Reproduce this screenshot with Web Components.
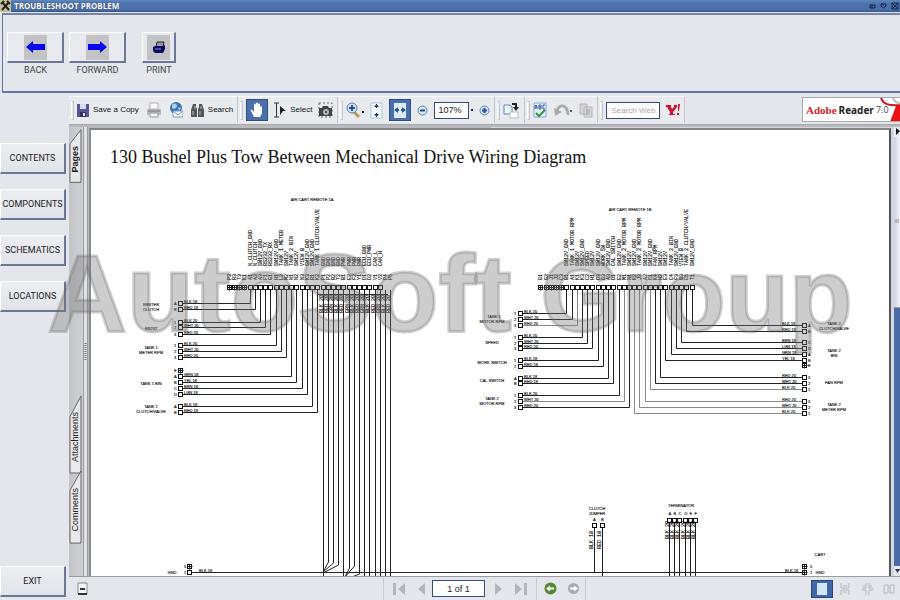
<!DOCTYPE html>
<html lang="en">
<head>
<meta charset="utf-8">
<title>Troubleshoot Problem</title>
<style>
html,body{margin:0;height:100%}
body{background:#e5e6eb;font-family:"Liberation Sans",Arial,sans-serif;color:#222;overflow:hidden}
</style>
</head>
<body>
<trouble-app></trouble-app>
<script>
const define=(name,css,html,after)=>{
  const t=document.createElement('template');
  t.innerHTML=`<style>*,::before,::after,:host::before{box-sizing:border-box}button{font:inherit;color:inherit;margin:0;padding:0;border:0;background:none}svg{display:block}${css}</style>${html}`;
  customElements.define(name,class extends HTMLElement{
    constructor(){super();this.attachShadow({mode:'open'}).append(t.content.cloneNode(true));}
    connectedCallback(){if(after)after(this.shadowRoot,this);}
  });
};

define('title-bar',`
:host{display:flex;align-items:center;height:12px;background:linear-gradient(#6088c0 0,#4c73ae 3px,#4a70ab 10px,#2f4f85 12px);color:#fff;padding-right:0}
h1{margin:0 auto 0 3px;font:bold 8px/10px "Open Sans",sans-serif;text-shadow:0 0 1px #123}
.ctl{width:11px;height:11px;display:flex;align-items:center;justify-content:center}`,
`<svg width="11" height="12" viewBox="0 0 11 12"><path d="M0 0h11v12H0z" fill="#c6c19a"/><path d="M2 2l7 8M9 2L2 10M1 4l3-3M7 1l3 3" stroke="#222" stroke-width="2" fill="none"/></svg>
<h1>TROUBLESHOOT PROBLEM</h1>
<button class="ctl" aria-label="Minimize"><svg width="7" height="5"><path d="M1 1h5v3H1zM3 1v3" fill="none" stroke="#13223f"/></svg></button>
<button class="ctl" aria-label="Restore"><svg width="7" height="6"><path d="M1 1h5v2L3.500 5 1 3zM3 2h1" fill="none" stroke="#13223f"/></svg></button>
<button class="ctl" aria-label="Close"><svg width="8" height="8"><path d="M1 1h6v6H1zM1 1l6 6M7 1L1 7" fill="none" stroke="#13223f"/></svg></button>`);

define('nav-tool',`
:host{display:block}
button{display:flex;flex-direction:column;align-items:center;gap:1px;color:#444;font:9px/12px Roboto,sans-serif}
.face{width:var(--w,57px);height:31px;display:flex;align-items:center;justify-content:center;background:#e8e9ee;border:1px solid;border-color:#fff #6c7796 #6c7796 #fff;border-right-width:2px;border-bottom-width:2px}
.ic{width:23px;height:25px;background:#c3c3c5;display:flex;align-items:center;justify-content:center}`,
`<button><span class="face"><span class="ic"><slot name="icon"></slot></span></span><span><slot></slot></span></button>`);

define('action-panel',`
:host{display:flex;align-items:flex-start;gap:5px;height:80px;margin:1px 0 0 2px;padding:17px 4px;border:1px solid #63789f;border-right:0;border-top:2px solid #7186aa;border-bottom-width:2px}
.gap{margin-left:11px;--w:34px}`,
`<nav-tool>BACK<svg slot="icon" width="19" height="12"><path d="M0 6l7-6v3h12v6H7v3z" fill="#0808f0"/></svg></nav-tool>
<nav-tool>FORWARD<svg slot="icon" width="19" height="12"><path d="M19 6l-7-6v3H0v6h12v3z" fill="#0808f0"/></svg></nav-tool>
<nav-tool class="gap">PRINT<svg slot="icon" width="12" height="12"><path d="M4 1h7l-1 5H3z" fill="#999" stroke="#222"/><path d="M0 6l2-1h8l2-1v4l-2 4H2L0 10z" fill="#0b0b63"/><path d="M2 8h6M4 3h5" stroke="#8a8ad0"/></svg></nav-tool>`);

define('side-button',`
:host{display:block}
button{width:100%;height:31px;background:linear-gradient(#edeef2,#e2e3e9);border:1px solid;border-color:#fff #6c7796 #6c7796 #fff;border-right-width:2px;border-bottom-width:2px;font:9px/12px Roboto,sans-serif;color:#222;white-space:nowrap}`,
`<button><slot></slot></button>`);

define('side-menu',`
:host{display:flex;flex-direction:column;gap:15px;width:66px;padding:50px 0 3px;flex:none}
.end{margin-top:auto}`,
`<side-button>CONTENTS</side-button><side-button>COMPONENTS</side-button><side-button>SCHEMATICS</side-button><side-button>LOCATIONS</side-button><side-button class="end">EXIT</side-button>`);

define('tool-group',`
:host{display:flex;align-items:center;height:27px;gap:var(--gap,6px);padding:0 4px 0 2px;border-right:1px solid #c4c5cb;border-top:1px solid #f8f8fa;background:#e9eaee;flex:none}
:host::before{content:"";width:3px;height:19px;margin-right:calc(3px - var(--gap,6px));border:1px solid #c6c7cc;border-left-color:#fff}`,
`<slot></slot>`);

define('tool-button',`
:host{display:block;flex:none;font-size:8px;line-height:12px}
button{display:flex;align-items:center;gap:4px;height:22px;color:#111;white-space:nowrap}
:host([pressed]) button{width:22px;justify-content:center;background:#4a70ab;border:1px solid #2f4d80}`,
`<button><slot></slot></button>`,(r,h)=>r.querySelector('button').setAttribute('aria-label',h.getAttribute('label')||h.textContent.trim()));

define('reader-logo',`
:host{display:flex;align-items:center;margin-left:auto;width:98px;height:25px;border:1px solid #aaa;border-right:0;background:#fff;overflow:hidden;flex:none}
a{display:flex;align-items:center;gap:2px;height:100%;padding-left:3px;font:bold 10px/14px "Open Sans",sans-serif;color:#222;text-decoration:none;white-space:nowrap}
i{font:bold 11px/14px "Liberation Serif",serif;color:#d2232a}
small{font:9px/14px "Open Sans",sans-serif;color:#444}
svg{flex:none;margin-left:-12px}`,
`<a href="#"><i>Adobe</i><span>Reader</span><small>7.0</small><svg width="26" height="24"><path d="M2 0c2 6 7 8 20 7" fill="none" stroke="#c71f27" stroke-width="2"/><path d="M14 0c1 3 4 5 8 6" fill="none" stroke="#bbb" stroke-width="2"/><path d="M17 8l9-2v18H11z" fill="#ee1111"/></svg></a>`);

define('pdf-toolbar',`
:host{display:flex;align-items:center;height:32px;padding:3px 0 1px;border-bottom:1px solid #a9aab0}
.g1{--gap:8px}.g5{--gap:7px}
input{font:9px/12px "Liberation Sans",sans-serif;border:1px solid #344b78;background:#fff;color:#222;height:17px;padding:0 3px;border-radius:0;margin:0}
.zoom{width:35px}.web{width:54px;text-align:center;font-size:8px}
.web::placeholder{color:#aaa;opacity:1}
.combo{display:flex;align-items:center;gap:2px;width:39px}
.combo::after{content:"";width:2px;height:2px;background:#333;flex:none}`,
`<tool-group class="g1">
<tool-button><svg width="12" height="14"><path d="M0 1h12v13H0z" fill="#55549b"/><path d="M3 1h6v5H3z" fill="#dcdcee"/><path d="M3 9h6v5H3z" fill="#333360"/><path d="M6 10h2v3H6z" fill="#ddd"/></svg>Save a Copy</tool-button>
<tool-button label="Print"><svg width="14" height="16"><path d="M3 1h8v6H3z" fill="#fff" stroke="#aaa"/><path d="M0 7h14v6H0z" fill="#bbb"/><path d="M1 9h12" stroke="#777"/><path d="M3 11h8v4H3z" fill="#f3f3f3" stroke="#999"/></svg></tool-button>
<tool-button label="Email"><svg width="14" height="16"><circle cx="7" cy="6" r="6" fill="#3a74ae"/><path d="M3 3c2-3 5-1 5 1S5 8 3 6zM9 5l3 1-2 3z" fill="#a7d2e8"/><path d="M4 9h10v6H4z" fill="#f4f8fc" stroke="#7a9bc2"/><path d="M4 9l5 4 5-4" fill="none" stroke="#7a9bc2"/></svg></tool-button>
<tool-button><svg width="13" height="15"><path d="M2 1h3v3l1 2v8H0V7zM8 1h3l2 6v7H7V6l1-2z" fill="#555"/><path d="M2 8v4M9 8v4M4 3v3M10 3v3" stroke="#bbb"/></svg>Search</tool-button>
</tool-group>
<tool-group>
<tool-button pressed label="Hand"><svg width="14" height="16"><path d="M4 15L1 9c-1-1 0-2 1-1l2 2V3c0-2 1-2 2 0v4-5c0-2 2-2 2 0v5-4c0-2 2-2 2 0v5-3c0-1 2-1 2 0v6l-2 4z" fill="#fff"/></svg></tool-button>
<tool-button><svg width="12" height="16"><path d="M0 1h5M0 15h5M2.500 1v14" stroke="#333" fill="none"/><path d="M6 4l6 5H9l-3 4z" fill="#222"/></svg>Select</tool-button>
<tool-button label="Snapshot"><svg width="15" height="16"><path d="M1 1h13v14H1z" fill="none" stroke="#666" stroke-dasharray="2 2"/><path d="M1 6h3l1-2h5l1 2h3v8H1z" fill="#444"/><circle cx="8" cy="10" r="3" fill="#aab7c9"/><circle cx="8" cy="10" r="1" fill="#333"/></svg></tool-button>
</tool-group>
<tool-group>
<tool-button label="Zoom in tool"><svg width="18" height="17"><path d="M8 10l5 5" stroke="#b99b55" stroke-width="3"/><circle cx="6" cy="6" r="5" fill="#d5e6f5" stroke="#4e7cb3"/><path d="M3 6h6M6 3v6" stroke="#234f94" stroke-width="2"/><path d="M16 9h2v2h-2z" fill="#222"/></svg></tool-button>
<tool-button label="Fit page"><svg width="13" height="17"><path d="M1 1h11v15H1z" fill="#f3f8fc" stroke="#a9c5dc"/><path d="M6.500 2v4M6.500 11v4" stroke="#223b66"/><path d="M4 5l2.500-3L9 5zM4 12l2.500 3L9 12z" fill="#223b66"/></svg></tool-button>
<tool-button pressed label="Fit width"><svg width="14" height="17"><path d="M1 1h12v15H1z" fill="#dcedf9"/><path d="M1 8l4-3v2h1v2H5v2zM13 8L9 5v2H8v2h1v2z" fill="#2c5796"/></svg></tool-button>
<tool-button label="Zoom out"><svg width="11" height="11"><circle cx="5.500" cy="5.500" r="4.500" fill="#d8e5f3" stroke="#5a7fb2"/><path d="M3 5.500h5" stroke="#234f94" stroke-width="2"/></svg></tool-button>
<span class="combo"><input class="zoom" value="107%" aria-label="Zoom level"></span>
<tool-button label="Zoom in"><svg width="11" height="11"><circle cx="5.500" cy="5.500" r="4.500" fill="#d8e5f3" stroke="#5a7fb2"/><path d="M3 5.500h5M5.500 3v5" stroke="#234f94" stroke-width="2"/></svg></tool-button>
</tool-group>
<tool-group>
<tool-button label="Rotate"><svg width="17" height="17"><path d="M1 3h6l2 2v7H1z" fill="#eef5fb" stroke="#5c86bb"/><path d="M7 10h8v6H7z" fill="#fff" stroke="#bbb"/><path d="M9 2h4v3" fill="none" stroke="#222" stroke-width="2"/><path d="M10 5h6l-3 4z" fill="#222"/></svg></tool-button>
</tool-group>
<tool-group class="g5">
<tool-button label="Spelling"><svg width="14" height="16"><path d="M1 1h12v14H1z" fill="#e5f0fa" stroke="#86a9d2"/><path d="M2 7V4l1-1 1 1v3M2 5h2M6 7V3h2v4zM6 5h2M12 3h-2v4h2" fill="none" stroke="#315b9d"/><path d="M3 11l3 3 6-6" fill="none" stroke="#3c9447" stroke-width="2"/></svg></tool-button>
<tool-button label="Undo"><svg width="18" height="14"><path d="M3 8c2-7 10-8 11 4" fill="none" stroke="#aaa" stroke-width="3"/><path d="M0 5l8 4-7 4z" fill="#aaa"/><path d="M16 7h2v2h-2z" fill="#555"/></svg></tool-button>
<tool-button label="Copy"><svg width="14" height="15"><path d="M1 1h7v10H1zM5 4h8v10H5z" fill="#d6d6da" stroke="#b2b2b8"/><path d="M7 7h4M7 9h4M7 11h4" stroke="#aaa"/></svg></tool-button>
</tool-group>
<tool-group>
<input class="web" placeholder="Search Web" aria-label="Search Web">
<tool-button label="Yahoo search"><svg width="14" height="12"><path d="M0 1h5v2l1 2 2-2V1h3v2L7 8v2h2v1H3v-1h1V8L1 3H0zM12 0h2l-1 7h-1zM11 9h2v2h-2z" fill="#cf1030"/></svg></tool-button>
</tool-group>
<reader-logo></reader-logo>`);

define('page-tab',`
:host{display:grid}
button{display:grid;width:13px;height:var(--h);color:#222;font-size:8px}
svg{grid-area:1/1;width:100%;height:100%}
span{grid-area:1/1;writing-mode:vertical-rl;transform:rotate(180deg);place-self:center;padding-bottom:6px;font-size:9px;line-height:11px}
:host([current]) span{font-weight:bold}`,
`<button><svg viewBox="0 0 13 80" preserveAspectRatio="none"><path d="M1 79V22L12 1v78z" fill="#e9e9ec" stroke="#666" vector-effect="non-scaling-stroke"/></svg><span><slot></slot></span></button>`);

define('tab-strip',`
:host{display:flex;flex-direction:column;width:14px;padding:2px 0 32px;background:linear-gradient(90deg,#c4c5c9,#cfd0d3);flex:none}
.a{--h:54px}.b{--h:79px;margin-top:auto}.c{--h:74px;margin-top:-4px}`,
`<page-tab current class="a">Pages</page-tab><page-tab class="b">Attachments</page-tab><page-tab class="c">Comments</page-tab>`);

define('wiring-diagram',`
:host{display:block;flex:1;min-height:0;overflow:hidden}
svg{width:100%;height:100%}
text{font:4px "Liberation Sans",sans-serif;fill:#000;stroke:#000;stroke-width:.1px}
.v{font:5px "Liberation Mono",monospace}.m{text-anchor:middle}
path{fill:none;stroke:#222;stroke-width:1px}
rect{fill:#fff;stroke:#111}`,
`<svg><g id="d" transform="translate(-91 -180)"></g></svg>`,
r=>{
  const o=[],T=(x,y,s,c='')=>o.push(`<text x="${x}" y="${y}" class="${c}">${s}</text>`);
  const V=(x,y,s)=>o.push(`<text class="v" transform="translate(${x} ${y}) rotate(-90)">${s}</text>`);
  const P=(d,l)=>o.push(l?`<path d="${d}" style="stroke:#888"/>`:`<path d="${d}"/>`);
  const S=(x,y)=>o.push(`<rect x="${x-2}" y="${y-2}" width="4" height="4"/>`);
  const X=(x,y)=>{S(x,y);P(`M${x-2} ${y}h5M${x} ${y-2}v5`)};
  const Y=z=>Math.round(190+z/3)+.5;
  const at=(b,n)=>Math.round(b+5.214*n)+.5;
  const row=(b,skip,ids,labels)=>{
    ids.forEach((id,n)=>{const x=at(b,n);V(x+1,280,id);if(n<skip)X(x,287.5);else if(n<30)S(x,287.5)});
    labels.forEach((s,i)=>V(at(b,i+skip)+1,266,s));
  };
  const idsA='P3 R3 T3 K1 A1 A2 A3 F1 G1 H1 L2 M2 N1 N2 N3 K3 R1 K2 P1 P2 R2 T2 B1 E2 F2 Y1 D1 D2 V1 V2 P4 P5'.split(' ');
  row(228.7,4,idsA,['N_CLUTCH_GND','N_CLUTCH','SW12V_GND','RS232_TX','RS232_RX','SW12V_GND','TANK 1 METER','SW12V','TANK 2 BIN','SW12V','VIEW B','SW12V_GND','SW12V_GND','TANK 1 CLUTCH/VALVE','GND','GND','GND','GND','PWR','PWR','PWR','PWR','ECU_GND','ECU_PWR','CAN_L','CAN_H']);
  const idsB='G1 G2 J1 J2 C3 B1 A1 K1 K3 C2 H1 D3 G3 A3 D1 E2 M1 N1 K2 J3 A2 C1 K4 H2 E3 C4 F3 B3 C5 T1'.split(' ');
  row(540.3,5,idsB,['SW12V_GND','TANK 1 MOTOR RPM','SW12V','SW12V_GND','SPEED','SW12V','SW12V_GND','WORK SW','SW12V_GND','CAL SWITCH','SW12V_GND','TANK 2 MOTOR RPM','SW12V','SW12V_GND','TANK 2 MOTOR RPM','SW12V','SW12V_GND','FAN RPM','SW12V','SW12V','TANK 2 BIN','SW12V_GND','VIEW B','TANK 2 CLUTCH/VALVE','SW12V_GND']);
  const left=(b,start,sx,zs,cols,pins,pale=[])=>zs.forEach((z,i)=>{
    const y=Y(z),x=at(b,start+i);P(`M${x} 290V${y}H${sx+2}`,pale.includes(i));S(sx+.5,y);T(sx+4,y-1,cols[i]);T(sx-6,y+1,pins[i]);});
  left(228.7,4,180,[340,357,395,412,431,466,483,501,559,577,595,613,648,665],
    ['BLK 18','RED 18','BLK 20','WHT 20','RED 20','BLK 20','WHT 20','RED 20','GRN 18','YEL 18','BRN 18','LGN 18','BLK 18','RED 18'],'AB123123ABCDAB');
  X(180.5,370.5);T(174,372,'E');
  left(540.3,5,520,[370,387,404,441,458,475,511,528,563,580,614,632,651],
    ['BLK 20','WHT 20','RED 20','BLK 20','WHT 20','RED 20','BLK 18','RED 18','BLK 18','RED 18','BLK 20','WHT 20','RED 20'],'12312312AB123',[2,11]);
  const rc=['BLK 20','WHT 20','RED 20','BLK 20','WHT 20','RED 20','YEL 18','GRN 18','LGN 18','BRN 18','RED 18','BLK 18'];
  [668,651,632,598,580,562,509,492,475,456,422,405].forEach((z,i)=>{
    const y=Y(z),x=at(540.3,18+i);P(`M${x} 290V${y}H802`,i<4);S(804.5,y);T(782,y-1,rc[i]);T(808,y+1,'123123BADCBA'[i]);});
  X(804.5,365.5);T(808,367,'E');
  for(let n=18;n<32;n++){const x=at(228.7,n);
    const end={19:'V562L323 572',20:'V563L323 572',21:'V565L323 573',24:'V566L345 577',23:'V568L345 577',25:'V574L352 577'}[n]||'V577';
    P(`M${x} 290${end}`);V(x-1,313,['BLK 20','RED 20','GRN 20'][n%3]);}
  P('M318 294.5H388');
  [[312,201,'AIR CART REMOTE 1A'],[630,211,'AIR CART REMOTE 1B'],[151,306,'IGNITER'],[151,311,'CLUTCH'],[151,330,'RS232'],[151,349,'TANK 1'],[151,354,'METER RPM'],[151,385,'TANK 1 BIN'],[151,408,'TANK 1'],[151,413,'CLUTCH/VALVE'],
   [494,318,'TANK 1'],[492,323,'MOTOR RPM'],[492,344,'SPEED'],[492,364,'WORK SWITCH'],[492,382,'CAL SWITCH'],[492,400,'TANK 2'],[492,405,'MOTOR RPM'],
   [834,325,'TANK 2'],[834,330,'CLUTCH/VALVE'],[834,352,'TANK 2'],[834,357,'BIN'],[834,384,'FAN RPM'],[834,406,'TANK 2'],[834,411,'METER RPM'],
   [597,510,'CLUTCH'],[597,515,'JUMPER'],[681,507,'TERMINATOR'],[820,556,'CART'],[820,574,'GND'],[172,574,'GND']].forEach(a=>T(...a,'m'));
  P('M191 572.5H802');
  X(189.5,566.5);S(189.5,572.5);X(804.5,566.5);X(804.5,572.5);
  T(184,568,'5');T(184,574,'1');T(199,572,'BLK 18');T(785,572,'BLK 18');T(810,568,'5');T(810,574,'1');
  [594,602].forEach((x,i)=>{P(`M${x+.5} 527V${i?577:572}`);S(x+.5,525.5);V(x-1,549,i?'RED 18':'BLK 18');T(x-1,521,'AB'[i]);});
  for(let i=0;i<6;i++){const x=Math.round(669+5.2*i)+.5;P(`M${x} 522V577`);S(x,520.5);V(x-1,539,'BLK 20');T(x-1,515,'ABCDEF'[i]);}
  r.getElementById('d').innerHTML=o.join('');
});

define('document-page',`
:host{display:flex;flex-direction:column;flex:1;min-width:0;min-height:0;background:#fdfefd;border:2px solid #8b8c90;border-color:#85868a #55565a transparent #8b8c90;border-bottom:0}
h2{margin:0;padding:15px 19px 11px;font:18px/24px "Liberation Serif",serif;color:#111;white-space:nowrap}`,
`<h2>130 Bushel Plus Tow Between Mechanical Drive Wiring Diagram</h2><wiring-diagram></wiring-diagram>`);

define('scroll-bar',`
:host{display:flex;flex-direction:column;width:6px;flex:none;background:#4a6ca6}
.track{height:38%;background:linear-gradient(90deg,#cfd2e0,#f1f2f8);border-bottom:1px solid #8e99b5;display:flex;align-items:center;justify-content:center}
button{height:10px;background:#e9ebf3;display:flex;align-items:center;justify-content:center}
.dn{margin-top:auto}`,
`<button aria-label="Scroll up"><svg width="5" height="8"><path d="M1 0v7l4-4z" fill="#111"/></svg></button><div class="track"><svg width="4" height="5"><path d="M0 1h4M0 3h4" stroke="#8a8da0"/></svg></div>
<button class="dn" aria-label="Scroll down"><svg width="5" height="4"><path d="M0 0h5L2.500 4z" fill="#26395f"/></svg></button>`);

define('status-bar',`
:host{display:grid;grid-template-columns:1fr auto 1fr;align-items:center;height:24px;border-top:1px solid #9b9ca0;background:#e5e6eb;flex:none}
.nav{display:flex;align-items:center;height:22px;border:solid #c9cad0;border-width:0 1px}
button{display:flex;align-items:center;justify-content:center;height:18px}
input{width:53px;height:17px;border:1px solid #344b78;background:#fff;text-align:center;font:9px/12px "Liberation Sans",sans-serif;color:#222;margin:0 4px;padding:0}
.f{width:29px}.r{width:15px}.s{width:23px}.n{width:20px}
.z{display:flex;height:22px;align-items:center;border-left:1px solid #c9cad0;padding:0 0 0 2px;margin-left:4px}
.z button{width:23px}
.l{margin-left:8px;width:11px}
.v{display:flex;justify-content:flex-end}
.v button{width:22px}.v .on{width:22px;background:#4068a8;border:1px solid #2b4677;margin-right:1px}`,
`<button class="l" aria-label="Hide panel"><svg width="11" height="13"><path d="M1 1h9v11H1z" fill="#f6f6fa" stroke="#888"/><path d="M1 12h9M3 7h5" stroke="#333" stroke-width="2"/></svg></button>
<div class="nav"><button class="f" aria-label="First page"><svg width="12" height="12"><path d="M0 0h3v12H0zM12 0v12L5 6z" fill="#b4b5bb"/></svg></button>
<button class="r" aria-label="Previous page"><svg width="8" height="12"><path d="M8 0v12L1 6z" fill="#b4b5bb"/></svg></button>
<input value="1 of 1" aria-label="Page">
<button class="n" aria-label="Next page"><svg width="8" height="12"><path d="M0 0v12l7-6z" fill="#b4b5bb"/></svg></button>
<button class="s" aria-label="Last page"><svg width="12" height="12"><path d="M0 0l7 6-7 6zM9 0h3v12H9z" fill="#b4b5bb"/></svg></button>
<div class="z"><button aria-label="Previous view"><svg width="13" height="13"><circle cx="6.500" cy="6.500" r="6" fill="#538b32"/><path d="M2 6.500l4-3v2h4v2H6v2z" fill="#fff"/></svg></button>
<button aria-label="Next view"><svg width="13" height="13"><circle cx="6.500" cy="6.500" r="5.500" fill="#a9abb2"/><path d="M11 6.500l-4-3v2H3v2h4v2z" fill="#fff"/></svg></button></div></div>
<div class="v"><button class="on" aria-label="Single page"><svg width="10" height="12"><path d="M0 0h10v12H0z" fill="#cfe6fb"/></svg></button>
<button aria-label="Continuous"><svg width="11" height="12"><path d="M1 0v5h8V0M1 12V7h8v5M3 3h4M3 9h4" fill="none" stroke="#b6b7bd"/></svg></button>
<button aria-label="Continuous facing"><svg width="11" height="12"><path d="M0 5h4V0M7 0v5h4M0 7h4v5M7 12V7h4M1 3h2M8 3h2" fill="none" stroke="#b6b7bd"/></svg></button>
<button aria-label="Facing"><svg width="12" height="10"><path d="M1 1h4v8H1zM7 1h4v8H7z" fill="none" stroke="#b6b7bd"/></svg></button></div>`);

define('pdf-viewer',`
:host{display:flex;flex-direction:column;flex:1;min-width:0;min-height:0;margin-left:3px}
.body{display:flex;flex:1;min-height:0;background:#b9babd;padding-top:2px}
.split{width:5px;background:#e1e2e6;border:solid #9a9b9f;border-width:0 1px;flex:none;display:flex;align-items:center;justify-content:center}
.doc{display:flex;flex:1;min-width:0;padding:1px 3px 0 1px;background:linear-gradient(90deg,#b9babd 50%,#d5d6e0 0)}`,
`<pdf-toolbar></pdf-toolbar><div class="body"><tab-strip></tab-strip><div class="split"><svg width="3" height="18"><path d="M1.500 0v18" stroke="#777" stroke-dasharray="1 1" stroke-width="2"/></svg></div><div class="doc"><document-page></document-page></div><scroll-bar></scroll-bar></div><status-bar></status-bar>`);

define('water-mark',`
:host{position:absolute;left:0;right:0;top:215px;pointer-events:none}
svg{width:100%;height:160px}
text{font:bold 110px "Liberation Sans",Arial,sans-serif;text-anchor:middle;fill:rgba(120,120,120,.36);stroke:rgba(90,90,90,.28);stroke-width:3px;paint-order:stroke}
.g{font-size:104px}`,
`<svg><text x="50%" y="116">AutoSoft<tspan class="g"> Group</tspan></text></svg>`);

define('trouble-app',`
:host{display:flex;flex-direction:column;height:100vh;position:relative;overflow:hidden}
main{display:flex;flex:1;min-height:0}`,
`<title-bar></title-bar><action-panel></action-panel><main><side-menu></side-menu><pdf-viewer></pdf-viewer></main><water-mark></water-mark>`);
</script>
</body>
</html>
